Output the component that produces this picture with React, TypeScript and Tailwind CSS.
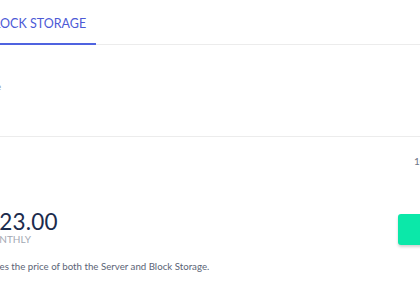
export default function App() {
  return (
    <div className="w-[420px] h-[290px] overflow-hidden bg-white font-['Lato',sans-serif]">
      {/* tabs */}
      <div className="flex border-b border-[#ececec] h-[45px]">
        <div className="-ml-[30px] w-[126px] flex items-end pl-[16px] pb-[13px] border-b-2 border-[#4f63e0] -mb-[1px]">
          <span className="text-[12.5px] leading-none text-[#4c5ad6]">BLOCK STORAGE</span>
        </div>
      </div>

      {/* storage info */}
      <div className="h-[92px] border-b border-[#ececec] flex items-start pt-[37px]">
        <span className="-ml-[29px] text-[9px] leading-none text-[#7a8294]">Storage</span>
      </div>

      {/* summary */}
      <div className="flex flex-col">
        <div className="flex justify-end pt-[19px] h-[74px]">
          <span className="-mr-[22px] text-[10px] leading-none text-[#6d7586]">10 GB</span>
        </div>
        <div className="flex items-start justify-between">
          <div className="flex flex-col -ml-[14px]">
            <span className="text-[22.5px] leading-[20px] mt-[1px] text-[#1b2b4d] tracking-[0.2px]">$23.00</span>
            <span className="-ml-[4px] mt-[1px] text-[10px] leading-[12px] text-[#a3a8b3]">MONTHLY</span>
          </div>
          <button className="mt-[3px] -mr-[40px] w-[62px] h-[31px] rounded-[3px] bg-[#0be8a9] shadow-[0_2px_3px_rgba(0,0,0,0.18)]" />
        </div>
        <p className="mt-[17px] -ml-[46px] text-[9.7px] leading-none text-[#5b6476] whitespace-nowrap">
          This includes the price of both the Server and Block Storage.
        </p>
      </div>
    </div>
  );
}
